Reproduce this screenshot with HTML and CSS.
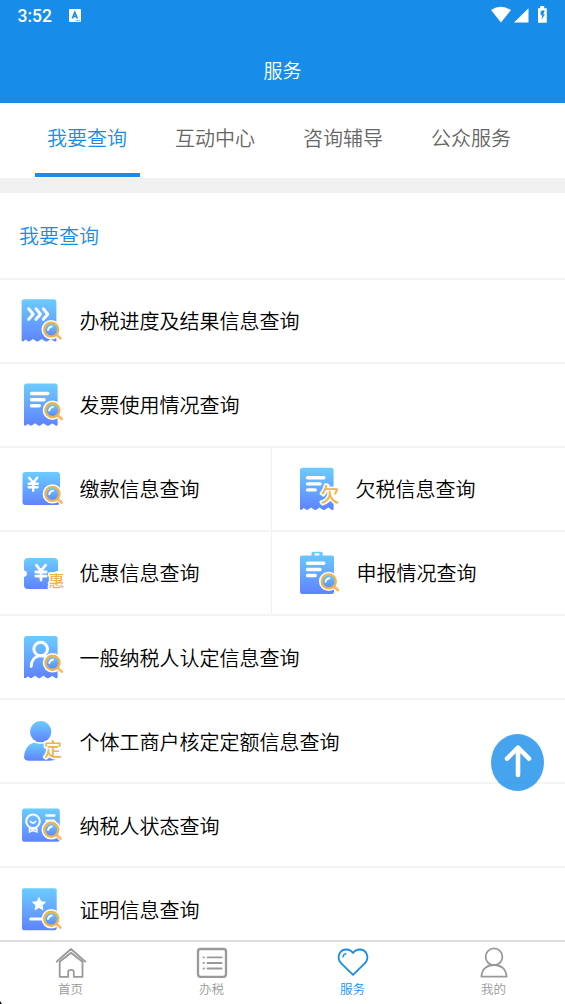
FILE: index.html
```html
<!DOCTYPE html>
<html lang="zh-CN">
<head>
<meta charset="utf-8">
<title>服务</title>
<link rel="stylesheet" href="styles.css">
</head>
<body>
<svg class="defs" width="0" height="0" aria-hidden="true">
  <defs>
    <linearGradient id="blue" x1="0" y1="0" x2="0" y2="1"><stop offset="0" stop-color="#6bccff"/><stop offset="1" stop-color="#5f83ff"/></linearGradient>
    <g id="mag" fill="none" stroke-linecap="round">
      <circle r="7" stroke="#fff" stroke-width="5.4"/>
      <path d="M5.5 5.3L9.3 8.3" stroke="#fff" stroke-width="5"/>
      <path d="M5.3 5.2L9.2 8.7" stroke="#fdb968" stroke-width="2.8"/>
      <circle r="7" fill="url(#blue)" stroke="#edb54f" stroke-width="2.4"/>
      <path d="M-3.2 .4Q-2.7-2.8 .7-3.3" stroke="#fff" stroke-width="1.8"/>
    </g>
    <path id="receipt" d="M6 5.2Q6 2.5 8.7 2.5H37Q39.6 2.5 39.6 5.2V44.2Q38 45.6 36.6 43.8L34.2 42.4L31.3 44.2Q29.5 45.5 28 44L25.4 42.3L22.6 44.2Q21.2 45.5 19.6 44L17 42.3L14.2 44.3Q12.7 45.5 11.4 43.7L9.5 42.9L8 44.6H6Z" fill="url(#blue)"/>
    <path id="lines" d="M13.5 12.5H29.8M13.5 18.7H26M13.5 24.7H21.3" fill="none" stroke="#fff" stroke-width="3.4" stroke-linecap="round"/>
    <path id="yen" d="M-4-6L0-1L4-6M0-1V7M-4.5 0H4.5M-4.5 3.5H4.5" fill="none" stroke="#fff" stroke-width="2.4" stroke-linecap="round" stroke-linejoin="round"/>
  </defs>
</svg>
<div class="app">
  <header class="header">
    <div class="status">
      <span class="clock">3:52</span>
      <svg class="ime" viewBox="0 0 12 13"><rect width="12" height="13" rx="1" fill="#fff"/><path d="M3.3 9.5L5.8 3.5L8.3 9.5M4.2 7.5H7.4" fill="none" stroke="#178de9" stroke-width="1.7"/><path d="M6.5 11.7H11" stroke="#178de9" stroke-width="1" stroke-dasharray="1 .6"/></svg>
      <svg class="signals" viewBox="0 0 56 17" fill="#fff"><path d="M0 4Q10-2.3 20 4L10 16.5Z"/><path d="M23 16.5L37.5 2.3V16.5Z"/><path d="M47 2.2H49.2V0H53.2V2.2H55.8V16.7H47Z"/><path d="M52.6 4.2L49.7 5V9.2H51.3L50.5 13.8L54 8.3H52.2L53.7 5Z" fill="#178de9"/></svg>
    </div>
    <h1 class="title">服务</h1>
  </header>
  <nav class="tabs">
    <a class="tab tab-active">我要查询</a><a class="tab">互动中心</a><a class="tab">咨询辅导</a><a class="tab">公众服务</a>
  </nav>
  <main class="content">
    <h2 class="section">我要查询</h2>
    <div class="row"><div class="item">
      <svg class="icon" viewBox="0 0 48 48"><use href="#receipt" transform="translate(-2.6 -.3) scale(1.035 1)"/><path d="M11.7 12L16.2 17.4L11.7 22.5M19 12L23.5 17.4L19 22.5M26.3 12L30.8 17.4L26.3 22.5" transform="translate(-1 -.2)" fill="none" stroke="#fff" stroke-width="3" stroke-linecap="round" stroke-linejoin="round"/><use href="#mag" x="33.2" y="32.6"/></svg>
      <span>办税进度及结果信息查询</span></div></div>
    <div class="row"><div class="item">
      <svg class="icon" viewBox="0 0 48 48"><use href="#receipt"/><use href="#lines"/><use href="#mag" x="34.4" y="29.2"/></svg>
      <span>发票使用情况查询</span></div></div>
    <div class="row">
      <div class="item half"><svg class="icon" viewBox="0 0 48 48"><rect x="4.5" y="7" width="37.5" height="33" rx="3" fill="url(#blue)"/><use href="#yen" x="15.2" y="18.7"/><use href="#mag" x="34.4" y="28.9"/></svg><span>缴款信息查询</span></div>
      <div class="item"><svg class="icon" viewBox="0 0 48 48"><use href="#receipt" y=".2"/><use href="#lines" y=".2"/><text class="glyph" x="26.5" y="37.3" font-size="19">欠</text></svg><span>欠税信息查询</span></div>
    </div>
    <div class="row">
      <div class="item half"><svg class="icon" viewBox="0 0 48 48"><path d="M6 13Q6 9 10 9H36Q40 9 40 13V22Q37.5 22.5 36.5 24V40H10Q6 40 6 36V28Q9 27.4 9 24.6Q9 22 6 21.5Z" fill="url(#blue)"/><use href="#yen" transform="translate(23 23) scale(1.15)"/><text class="glyph" x="30.5" y="38.2" font-size="16">惠</text></svg><span>优惠信息查询</span></div>
      <div class="item"><svg class="icon" viewBox="0 0 48 48"><path d="M8 6.5H17.5V4.5Q17.5 2.7 19.3 2.7H27Q28.7 2.7 28.7 4.5V6.5H38Q40 6.5 40 8.5V43Q40 45 38 45H8Q6 45 6 43V8.5Q6 6.5 8 6.5Z" fill="url(#blue)"/><rect x="20.5" y="4.3" width="5" height="2.2" rx="1" fill="#fff"/><use href="#lines" y="1.8"/><use href="#mag" x="34.7" y="32.4"/></svg><span class="shift">申报情况查询</span></div>
    </div>
    <div class="row lower"><div class="item">
      <svg class="icon" viewBox="0 0 48 48"><use href="#receipt" y=".5"/><g fill="none" stroke="#fff" stroke-width="3" stroke-linecap="round"><circle cx="22.7" cy="16" r="6.8"/><path d="M13.2 33.3C13.5 20.5 29 19.5 32 29"/></g><use href="#mag" x="34.5" y="29.8"/></svg>
      <span>一般纳税人认定信息查询</span></div></div>
    <div class="row lower"><div class="item">
      <svg class="icon" viewBox="0 0 48 48"><circle cx="22.7" cy="14.7" r="10.6" fill="url(#blue)"/><path d="M6 40C6.5 32 11 26 17 25.7Q22.5 28 28 25.7C35 27 39 33 39.3 40Q39.3 43.7 30 43.7H11Q6 43.7 6 40Z" fill="url(#blue)"/><text class="glyph" x="26" y="38.8" font-size="18">定</text></svg>
      <span>个体工商户核定定额信息查询</span></div></div>
    <div class="row lower"><div class="item">
      <svg class="icon" viewBox="0 0 48 48"><rect x="4" y="7.5" width="37.8" height="33.2" rx="2.5" fill="url(#blue)"/><g fill="none" stroke="#fff"><circle cx="15" cy="20.3" r="6.8" stroke-width="2"/><path d="M12 20Q15 24 18 20" stroke-width="1.9"/><path d="M11.5 26.5V31L15 29.6L18.8 31V26.5M12 28H18" stroke-width="1.5"/><path d="M28.5 14.5H36.3M28.5 19.7H36" stroke-width="2.6" stroke-linecap="round"/></g><use href="#mag" x="33.2" y="28.8"/></svg>
      <span>纳税人状态查询</span></div></div>
    <div class="row lower"><div class="item">
      <svg class="icon" viewBox="0 0 48 48"><rect x="4" y="3.2" width="34.7" height="42" rx="2" fill="url(#blue)"/><path d="M21 12.5L22.9 16.7L27.5 17.2L24 20.3L25 24.8L21 22.4L17 24.8L18 20.3L14.5 17.2L19.1 16.7Z" fill="#fff" stroke="#fff" stroke-linejoin="round"/><path d="M12.8 34H26" stroke="#fff" stroke-width="3.2" stroke-linecap="round"/><use href="#mag" x="33.2" y="33.8"/></svg>
      <span>证明信息查询</span></div></div>
  </main>
  <nav class="bottom">
    <a class="dest"><svg viewBox="0 0 32 32"><path d="M1.7 14.7L16 2L30.3 14.7M4.7 14.8V29.8H13.2V24.8Q13.2 22.8 16 22.8Q18.8 22.8 18.8 24.8V29.8H27.5V14.8L16 5.8Z"/></svg><span>首页</span></a>
    <a class="dest"><svg viewBox="0 0 32 32"><rect x="2" y="2" width="28" height="27.8" rx="2.5" stroke-width="2.3"/><path d="M11.5 10.3H25.7M11.5 16H25.7M11.5 21.5H25.7M7.5 10.3H8M7.5 16H8M7.5 21.5H8"/></svg><span>办税</span></a>
    <a class="dest dest-active"><svg viewBox="0 0 32 32"><path d="M16 27.8L4 16.2C-1 10.5 2.6 2.5 9.3 2.5Q13.5 2.5 16 6Q18.5 2.5 22.7 2.5C29.4 2.5 33 10.5 28 16.2Z"/><path d="M6 10Q6.3 7.2 9 6.6" stroke-width="1.3"/></svg><span>服务</span></a>
    <a class="dest"><svg viewBox="0 0 32 32"><circle cx="16" cy="9.8" r="8.4"/><path d="M3.4 29.7C3.7 22.5 8.5 18 16 18S28.3 22.5 28.6 29.7Z"/></svg><span>我的</span></a>
  </nav>
  <svg class="top-button" viewBox="0 0 53 57"><ellipse cx="26.5" cy="28.5" rx="26.5" ry="28.5" fill="#178de9" fill-opacity=".8"/><path d="M16 24.7L27 13.7L38 24.7M27 13.7V41" fill="none" stroke="#fff" stroke-width="4.6" stroke-linecap="round" stroke-linejoin="round"/></svg>
  <span class="corner"></span>
</div>
</body>
</html>
```
FILE: styles.css
```css
* { box-sizing: border-box; }
body { margin: 0; background: #fff; color: #000; font-family: "Noto Sans CJK SC DemiLight", "Noto Sans CJK SC", sans-serif; font-weight: 350; }
.defs { position: absolute; }
.app { position: relative; display: flex; flex-direction: column; width: 565px; height: 1004px; overflow: hidden; }
.header { flex: none; height: 103px; background: #178de9; color: #fff; }
.status { display: flex; height: 32px; padding: 0 18.5px 0 17.5px; }
.clock { width: 51px; font: 500 17.5px/33px Roboto, sans-serif; }
.ime { width: 12px; height: 13px; margin-top: 9px; }
.signals { width: 56px; height: 17px; margin: 6px 0 0 auto; }
.title { margin: 0; padding-top: 23px; font-size: 19px; line-height: 30px; font-weight: 350; text-align: center; }
.tabs { flex: none; display: flex; height: 90px; padding: 0 30px 0 23px; border-bottom: 15px solid #f0f0f0; }
.tab { position: relative; flex: 1; font-size: 20px; line-height: 70px; text-align: center; color: #666; }
.tab-active { color: #178de9; }
.tab-active::after { content: ""; position: absolute; left: 11.5px; top: 69.5px; width: 105.5px; height: 4px; background: #178de9; }
.content { flex: 1; min-height: 0; overflow: hidden; }
.section { height: 85px; margin: 0; padding-left: 19px; font-size: 20px; line-height: 86px; font-weight: 350; color: #178de9; }
.row { display: flex; height: 84px; border-top: 2px solid #f4f4f4; }
.item { display: flex; flex: 1; align-items: center; gap: 13.4px; padding-left: 18px; font-size: 20px; line-height: 30px; }
.lower span { padding-top: 1px; }
.half { flex: none; width: 272px; border-right: 1.5px solid #f0f0f0; }
.half + .item { padding-left: 22px; }
.shift { padding-left: 1px; }
.icon { flex: none; width: 48px; height: 48px; }
.glyph { font-family: "Noto Sans CJK SC", sans-serif; font-weight: 500; fill: #edb54f; stroke: #fff; stroke-width: 3.5px; stroke-linejoin: round; paint-order: stroke; }
.bottom { flex: none; display: flex; height: 64px; padding-right: 1px; border-top: 2px solid #ddd; background: #fff; }
.dest { flex: 1; display: flex; flex-direction: column; align-items: center; padding-top: 5px; color: #999; font-size: 12.5px; line-height: 19px; }
.dest svg { width: 32px; height: 32px; fill: none; stroke: currentColor; stroke-width: 1.8; stroke-linejoin: round; stroke-linecap: round; }
.dest-active { color: #178de9; }
.top-button { position: absolute; left: 491px; top: 734px; width: 53px; height: 57px; }
.corner { position: absolute; left: 0; bottom: 0; width: 2px; height: 3px; background: #000; clip-path: polygon(0 0, 100% 100%, 0 100%); }
```
